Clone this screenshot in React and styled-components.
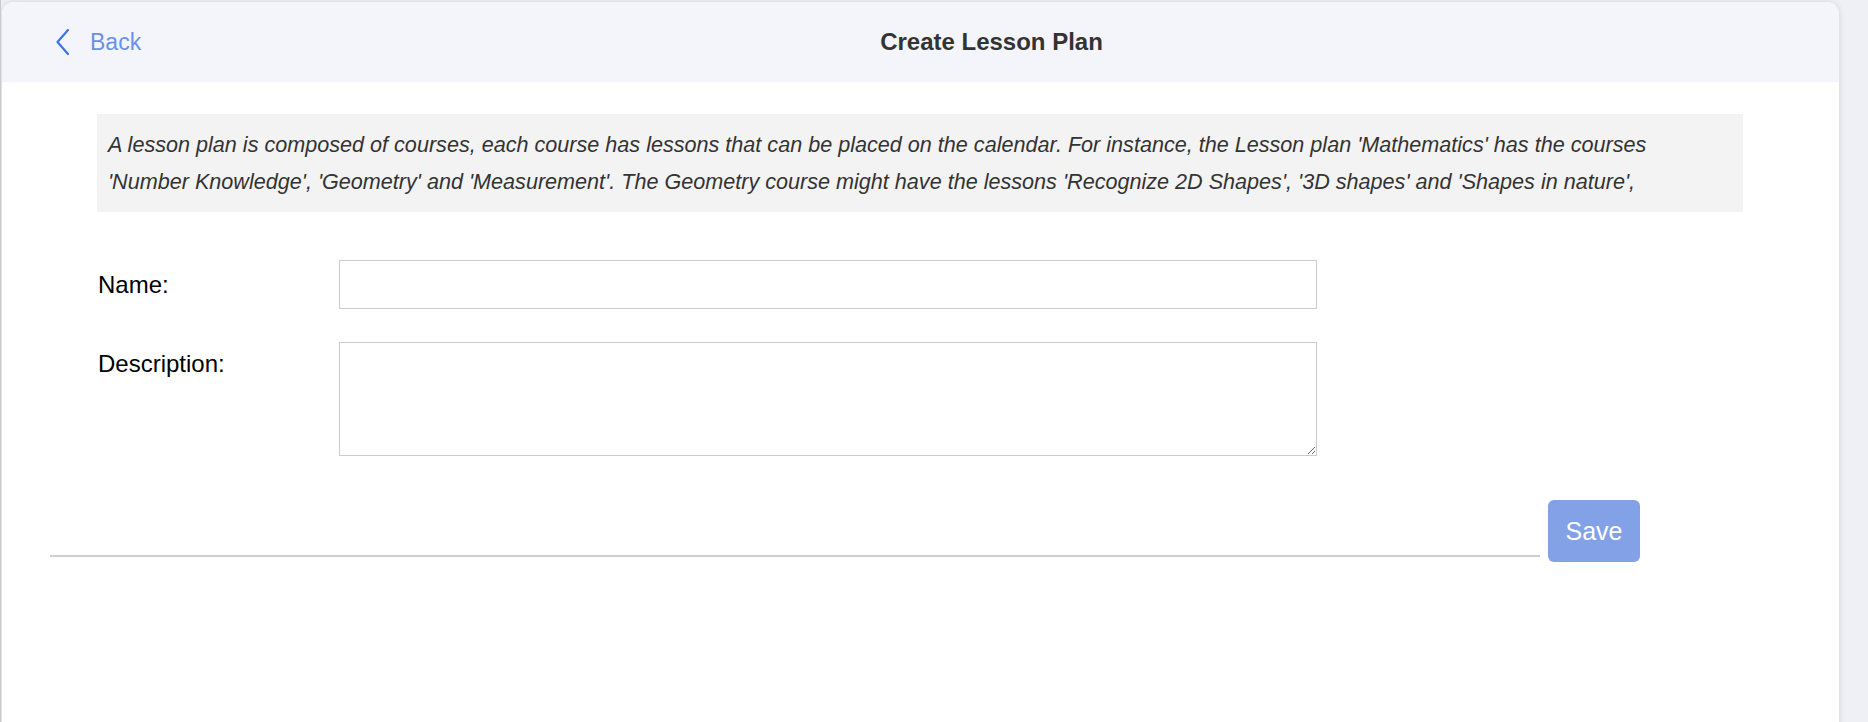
import React from "react";
import styled, { createGlobalStyle } from "styled-components";

const GlobalStyle = createGlobalStyle`
	html, body {
		margin: 0;
		padding: 0;
		background-color: #eff0f5;
		font-family: "Liberation Sans", Arial, sans-serif;
	}
	* {
		box-sizing: border-box;
	}
`;

function ChevronLeft() {
	return (
		<svg width="16" height="28" viewBox="0 0 16 28" fill="none">
			<polyline
				points="13,2 2.5,14 13,26"
				stroke="#3b74e4"
				strokeWidth="2.2"
				strokeLinecap="round"
				strokeLinejoin="round"
			/>
		</svg>
	);
}

function App() {
	return (
		<>
			<GlobalStyle />
			<Page>
				<Card>
					<Header>
						<BackLink href="#">
							<ChevronLeft />
							<BackText>Back</BackText>
						</BackLink>
						<Title>Create Lesson Plan</Title>
					</Header>

					<Content>
						<InfoBox>
							A lesson plan is composed of courses, each course has lessons that
							can be placed on the calendar. For instance, the Lesson plan
							'Mathematics' has the courses
							<br />
							'Number Knowledge', 'Geometry' and 'Measurement'. The Geometry
							course might have the lessons 'Recognize 2D Shapes', '3D shapes'
							and 'Shapes in nature',
						</InfoBox>

						<Form>
							<FormRow $align="center">
								<Label htmlFor="name">Name:</Label>
								<TextInput id="name" type="text" />
							</FormRow>
							<FormRow $align="flex-start">
								<Label htmlFor="desc" $top>
									Description:
								</Label>
								<TextArea id="desc" />
							</FormRow>
						</Form>
					</Content>

					<Footer>
						<Divider />
						<SaveButton type="button">Save</SaveButton>
					</Footer>
				</Card>
			</Page>
		</>
	);
}

export default App;

// Styled Components

const Page = styled.div`
	width: 100%;
	height: 722px;
	overflow: hidden;
	padding: 2px 29px 0 1px;
	border-left: 1px solid #c9c9ce;
`;

const Card = styled.div`
	display: flex;
	flex-direction: column;
	height: 760px;
	background-color: #ffffff;
	border-radius: 12px 12px 0 0;
	box-shadow: 0 0 6px rgba(0, 0, 0, 0.12);
	overflow: hidden;
`;

const Header = styled.header`
	display: flex;
	align-items: center;
	height: 80px;
	background-color: #f4f5fa;
`;

const BackLink = styled.a`
	display: flex;
	align-items: center;
	gap: 19px;
	padding-left: 53px;
	width: 142px;
	text-decoration: none;
`;

const BackText = styled.span`
	font-size: 23px;
	color: #6a91ea;
`;

const Title = styled.h1`
	flex: 1;
	margin: 0;
	text-align: center;
	font-size: 24px;
	font-weight: bold;
	color: #333333;
`;

const Content = styled.div`
	display: flex;
	flex-direction: column;
	padding: 32px 0 0 95px;
`;

const InfoBox = styled.p`
	width: 1646px;
	margin: 0;
	padding: 12px 11px;
	background-color: #f3f3f3;
	font-size: 21.6px;
	font-style: italic;
	line-height: 37px;
	white-space: nowrap;
	color: #333333;
`;

const Form = styled.div`
	display: flex;
	flex-direction: column;
	gap: 33px;
	padding-top: 48px;
`;

const FormRow = styled.div`
	display: flex;
	align-items: ${(props) => props.$align};
`;

const Label = styled.label`
	width: 242px;
	padding-left: 1px;
	padding-top: ${(props) => (props.$top ? "8px" : "0")};
	font-size: 24px;
	color: #000000;
`;

const TextInput = styled.input`
	width: 978px;
	height: 49px;
	border: 1px solid #cccccc;
	border-radius: 0;
	padding: 0 10px;
	font-size: 20px;
	font-family: inherit;
	outline: none;
`;

const TextArea = styled.textarea`
	width: 978px;
	height: 114px;
	border: 1px solid #cccccc;
	border-radius: 0;
	padding: 8px 10px;
	font-size: 20px;
	font-family: inherit;
	outline: none;
`;

const Footer = styled.div`
	display: flex;
	align-items: flex-end;
	gap: 8px;
	padding: 44px 0 0 48px;
`;

const Divider = styled.div`
	width: 1490px;
	height: 2px;
	margin-bottom: 5px;
	background-color: #d0d0d0;
`;

const SaveButton = styled.button`
	width: 92px;
	height: 62px;
	border: none;
	border-radius: 6px;
	background-color: #83a1e6;
	color: #ffffff;
	font-family: inherit;
	font-size: 25px;
	cursor: pointer;
`;
